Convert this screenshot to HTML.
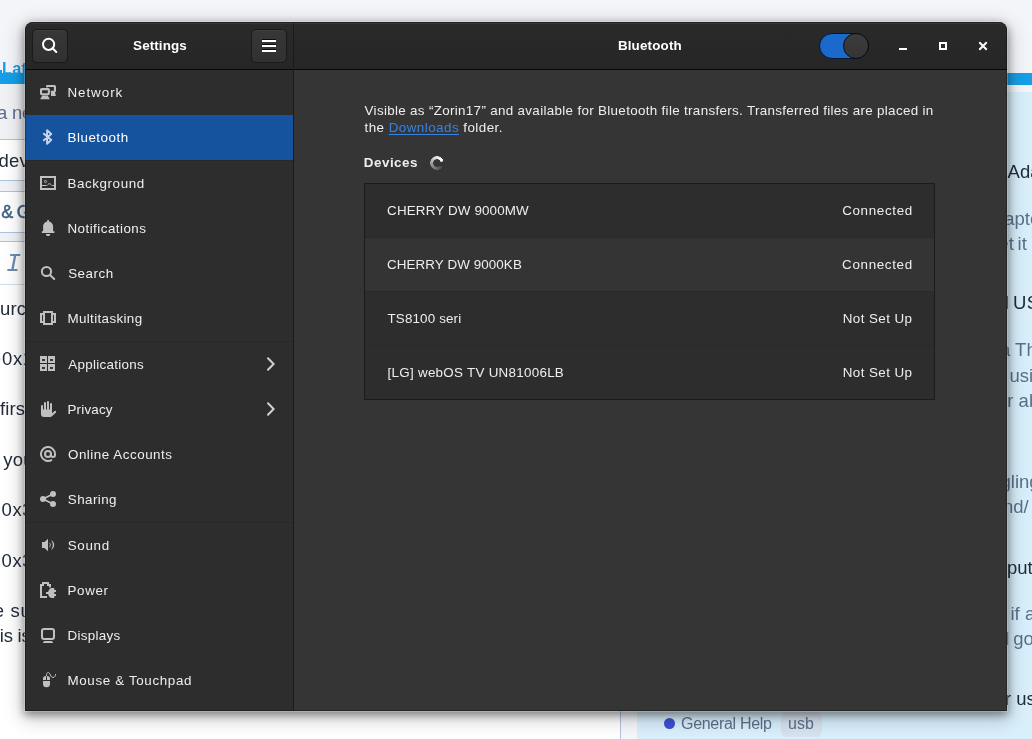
<!DOCTYPE html>
<html lang="en"><head><meta charset="utf-8"><title>Settings - Bluetooth</title>
<style>
html,body{margin:0;padding:0}
body{width:1032px;height:739px;overflow:hidden;position:relative;background:#fff;font-family:"Liberation Sans",sans-serif;}
.abs{position:absolute}
.t{position:absolute;white-space:pre;font-size:13.4px;line-height:20px;color:#eeeeec}
.bgt{position:absolute;white-space:pre;font-family:"Liberation Sans",sans-serif;font-size:18.5px;line-height:24px;color:#222c3a}
.gr{color:#5c6f8a}
#win{will-change:transform;position:absolute;left:25px;top:22px;width:982px;height:689px;border-radius:8px 8px 0 0;overflow:hidden;background:#353535}
#shadow{position:absolute;left:25px;top:22px;width:982px;height:689px;border-radius:8px 8px 0 0;box-shadow:0 0 0 1px rgba(255,255,255,.22),0 3px 9px 1px rgba(0,0,0,.38),0 5px 19px 3px rgba(0,0,0,.22)}
.hb{position:absolute;top:0;height:47px;background:linear-gradient(#2a2a2a,#262626);border-bottom:1px solid #080808}
.btn{position:absolute;top:7px;width:34px;height:32px;border:1px solid #1a1a1a;border-radius:5px;background:linear-gradient(#373737,#313131);box-shadow:inset 0 1px rgba(255,255,255,.03)}
.row{position:absolute;left:0;width:268px;height:45px}
.row svg{position:absolute;left:15px;top:14px}
.row .t{left:43px;top:12.500px}
.sep{position:absolute;left:0;width:268px;height:1px;background:#282828}
.lrow{position:absolute;left:1px;width:569px;height:53px;background:#2d2d2d}
.lrow .n{left:22px;top:16.500px}
.lrow .s{left:478px;top:16.500px}
</style></head><body>
<div id="bg" class="abs" style="left:0;top:0;width:1032px;height:739px;will-change:transform">
<div class="abs" style="left:0;top:0;width:1032px;height:92px;background:#f4f5f9"></div>
<div class="abs" style="left:0;top:84px;width:620px;height:56px;background:#f1f2f6"></div>
<div class="abs" style="left:0;top:140px;width:620px;height:599px;background:#fff"></div>
<div class="abs" style="left:0;top:73px;width:60px;height:11px;background:#169fe8"></div>
<div class="abs" style="left:0;top:70px;width:2px;height:3px;background:#169fe8"></div>
<div class="bgt" style="left:2px;top:56px;font-weight:bold;font-size:16.300px;letter-spacing:.3px;color:#169fe8">Latest</div>
<div class="abs" style="left:0;top:139px;width:60px;height:1px;background:#b0c2d9"></div>
<div class="abs" style="left:0;top:180px;width:60px;height:12px;background:#f0f2f7;border-top:1px solid #b0c2d9;border-bottom:1px solid #b0c2d9;box-sizing:border-box"></div>
<div class="abs" style="left:0;top:232px;width:60px;height:10px;background:#f0f2f7;border-top:1px solid #b0c2d9;border-bottom:1px solid #b0c2d9;box-sizing:border-box"></div>
<div class="abs" style="left:0;top:284px;width:60px;height:1px;background:#d5dde9"></div>
<div class="bgt gr" style="left:-3px;top:101px;letter-spacing:-.2px">a new topic</div>
<div class="bgt" style="left:-1.500px;top:149px;letter-spacing:.2px">device</div>
<div class="bgt" style="left:1.200px;top:199.500px;font-size:18px;letter-spacing:-.7px;color:#3f5f85;-webkit-text-stroke:.45px">&amp; General</div>
<div class="bgt" style="left:6px;top:250.500px;font-family:'Liberation Mono',monospace;font-style:italic;font-size:25px;line-height:28px;color:#6a8db5">I</div>
<div class="bgt" style="left:0px;top:297px;letter-spacing:.2px">urce</div>
<div class="bgt" style="left:-9.300px;top:347px;letter-spacing:.9px">e0x<span style="letter-spacing:0;margin-left:-.8px">1</span></div>
<div class="bgt" style="left:0px;top:397px;letter-spacing:.1px">first</div>
<div class="bgt" style="left:3.300px;top:448px;letter-spacing:.1px">you</div>
<div class="bgt" style="left:1.500px;top:498px;letter-spacing:.6px">0x3</div>
<div class="bgt" style="left:1.500px;top:549px;letter-spacing:.6px">0x3</div>
<div class="bgt" style="left:-6.300px;top:599px;letter-spacing:.7px">e sure</div>
<div class="bgt" style="left:-.3px;top:624px;word-spacing:-.7px">is is</div>
<div class="abs" style="left:960px;top:73px;width:72px;height:12px;background:#169fe8"></div>
<div class="abs" style="left:637px;top:92px;width:395px;height:647px;background:#d9effc"></div>
<div class="abs" style="left:620px;top:700px;width:1px;height:39px;background:#b0c2d9"></div>
<div class="abs" style="left:621px;top:700px;width:16px;height:39px;background:#f4f6fa"></div>
<div class="bgt" style="left:1001.4px;top:160px">-Adapter</div>
<div class="bgt gr" style="left:1004.200px;top:207px">apter</div>
<div class="bgt gr" style="left:998.500px;top:232px;word-spacing:-1.500px">et it</div>
<div class="bgt" style="left:1005px;top:291px;letter-spacing:.5px;word-spacing:-2.300px">l USB</div>
<div class="bgt gr" style="left:1000px;top:338px">a The</div>
<div class="bgt gr" style="left:1009.400px;top:364px">using</div>
<div class="bgt gr" style="left:1007.300px;top:389px">r about</div>
<div class="bgt gr" style="left:1000.500px;top:470px">gling</div>
<div class="bgt gr" style="left:1003px;top:495px">nd/</div>
<div class="bgt" style="left:1007px;top:556px">put</div>
<div class="bgt gr" style="left:1010.500px;top:602px">if a</div>
<div class="bgt gr" style="left:1005.200px;top:627px;word-spacing:-1.300px">l go</div>
<div class="bgt" style="left:1005px;top:687px">r us</div>
<div class="abs" style="left:664px;top:718px;width:11px;height:11px;border-radius:50%;background:#3c50d6"></div>
<div class="bgt gr" style="left:681px;top:712px;font-size:16px;letter-spacing:-.3px">General Help</div>
<div class="abs" style="left:781px;top:712px;width:40.500px;height:25px;border-radius:6px;background:#d7e2ef"></div>
<div class="bgt gr" style="left:788px;top:712px;font-size:16px">usb</div>
</div>
<div id="shadow"></div>
<div id="win">
<div class="hb" style="left:0;width:268px"></div><div class="hb" style="left:269px;width:713px"></div>
<div class="abs" style="left:268px;top:0;width:1px;height:689px;background:#1b1b1b"></div>
<div class="btn" style="left:7px"><svg class="abs" style="left:0;top:0" width="34" height="32" viewBox="0 0 34 32"><circle cx="15.600" cy="14.300" r="5.600" fill="none" stroke="#fff" stroke-width="2"/><path d="M19.800 18.500l3.500 3.500" stroke="#fff" stroke-width="2" stroke-linecap="round"/></svg></div>
<div class="btn" style="left:226px"><svg class="abs" style="left:0;top:0" width="34" height="32" viewBox="0 0 34 32"><path fill="#000" d="M10 9.200h14v1H10zM10 14.200h14v1H10zM10 19.200h14v1H10z"/><path fill="#fff" d="M10 10h14v2H10zM10 15h14v2H10zM10 20h14v2H10z"/></svg></div>
<div class="t" id="t_settings" style="left:108px;top:14px;font-weight:bold;color:#fff;-webkit-text-stroke:0;letter-spacing:0.111px;margin-left:0.11px;">Settings</div>
<div class="t" id="t_bt" style="left:593px;top:14px;font-weight:bold;color:#fff;-webkit-text-stroke:0;letter-spacing:0.168px;margin-left:-0.14px;">Bluetooth</div>
<div class="abs" style="left:794px;top:11px;width:48px;height:24px;border:1px solid #051634;border-radius:13px;background:#1b69cb"></div>
<div class="abs" style="left:818px;top:11px;width:24px;height:24px;border:1px solid #0b0b0b;border-radius:50%;background:linear-gradient(#3c3c3c,#353535)"></div>
<svg class="abs" style="left:870px;top:16px" width="100" height="16" viewBox="0 0 100 16"><path fill="#fff" d="M4 10h8v2H4z"/><path fill="none" stroke="#fff" stroke-width="2" d="M45 5h6v6h-6z"/><path fill="none" stroke="#fff" stroke-width="2" stroke-linecap="square" d="M85 5l6 6M91 5l-6 6"/></svg>
<div class="abs" id="side" style="left:0;top:48px;width:268px;height:641px;background:#2d2d2d">
<div class="row" style="top:0px;"><svg width="16" height="16" viewBox="0 0 16 16"><g transform="translate(0 .55)"><path fill="#c0c0c0" fill-rule="evenodd" d="M1.600 3.400h6.700A1.600 1.600 0 0 1 9.900 5v4a1.600 1.600 0 0 1-1.600 1.600H1.600A1.600 1.600 0 0 1 0 9V5a1.600 1.600 0 0 1 1.600-1.600zM2.100 5.600v3.200h5.700V5.600z"/><path fill="#c0c0c0" d="M2.300 11h5.400l2.100 3.600H.2z"/><path fill="#c0c0c0" d="M6.200.5h8.200A1.600 1.600 0 0 1 16 2.100v4.300a1.400 1.400 0 0 1-1 1.300l.9 3.700H11V7.700h-.3V6.100h3.200V2.500H7.800v.4H6.200z"/></g></svg><div class="t" id="s_network" style="letter-spacing:0.949px;margin-left:-0.57px;">Network</div></div>
<div class="row" style="top:45px;background:#15539e;"><svg width="16" height="16" viewBox="0 0 16 16"><path fill="none" stroke="#c8d6ea" stroke-width="1.9" stroke-linejoin="round" stroke-linecap="round" d="M3.9 4.7l7.3 6.3L7.100 14.800V1.200L11.200 5l-7.300 6.300"/></svg><div class="t" id="s_bluetooth" style="color:#fff;letter-spacing:0.535px;margin-left:-0.58px;">Bluetooth</div></div>
<div class="row" style="top:91px;"><svg width="16" height="16" viewBox="0 0 16 16"><rect x="1" y="2" width="14" height="12" fill="none" stroke="#c0c0c0" stroke-width="2"/><circle cx="5.5" cy="6.5" r="1.1" fill="none" stroke="#c0c0c0" stroke-width=".9"/><path fill="none" stroke="#c0c0c0" stroke-width="1" d="M2 10.5h4.5c1.200 0 1.500-1.800 2.900-1.800s1.700 1.800 2.900 1.800H14"/></svg><div class="t" id="s_background" style="letter-spacing:0.585px;margin-left:-0.58px;">Background</div></div>
<div class="row" style="top:136px;"><svg width="16" height="16" viewBox="0 0 16 16"><path fill="#c0c0c0" d="M3.100 11.300V6.500C3.100 3.800 5 2.100 7.200 1.600V.800a.9.900 0 0 1 1.800 0v.8c2.200.5 4.100 2.200 4.100 4.900v4.800h1.300v1.800H1.800v-1.800zM5.800 14h4.500a2.250 2.100 0 0 1-4.500 0z"/></svg><div class="t" id="s_notifications" style="letter-spacing:0.463px;margin-left:-0.57px;">Notifications</div></div>
<div class="row" style="top:181px;"><svg width="16" height="16" viewBox="0 0 16 16"><circle cx="6.500" cy="6.500" r="4.600" fill="none" stroke="#c0c0c0" stroke-width="2"/><path stroke="#c0c0c0" stroke-width="2" stroke-linecap="round" d="M10.200 10.200l4 3.800"/></svg><div class="t" id="s_search" style="letter-spacing:0.521px;margin-left:0.18px;">Search</div></div>
<div class="row" style="top:226px;"><svg width="16" height="16" viewBox="0 0 16 16"><rect x="4" y="2" width="8" height="12" fill="none" stroke="#c0c0c0" stroke-width="2"/><path fill="#c0c0c0" d="M0 3h3v2H2v6h1v2H0zM16 3h-3v2h1v6h-1v2h3z"/></svg><div class="t" id="s_multitasking" style="letter-spacing:0.362px;margin-left:-0.57px;">Multitasking</div></div>
<div class="row" style="top:272px;"><svg width="16" height="16" viewBox="0 0 16 16"><path fill="#c0c0c0" d="M0 0h7v7h-7z"/><path fill="#141414" d="M2 3.2v1.600h3v-1.600z"/><path fill="#c0c0c0" d="M0 8h7v7h-7z"/><path fill="#141414" d="M2 11.2v1.600h3v-1.600z"/><path fill="#c0c0c0" d="M8 0h7v7h-7z"/><path fill="#141414" d="M10 3.2v1.600h3v-1.600z"/><path fill="#c0c0c0" d="M8 8h7v7h-7z"/><path fill="#141414" d="M10 11.2v1.600h3v-1.600z"/></svg><div class="t" id="s_applications" style="letter-spacing:0.307px;margin-left:0.23px;">Applications</div></div>
<div class="row" style="top:317px;"><svg width="16" height="16" viewBox="0 0 16 16"><path fill="#c0c0c0" d="M1 5a1 1 0 0 1 2 0v3.600h1V2a1 1 0 0 1 2 0v6.600h1V1a1 1 0 0 1 2 0v7.600h1V3a1 1 0 0 1 2 0v9.300l2.600-2.300a1 1 0 0 1 1.400 1.400l-4.300 4.100c-.4.300-.8.500-1.300.500H4a3 3 0 0 1-3-3z"/></svg><div class="t" id="s_privacy" style="letter-spacing:0.200px;margin-left:-0.57px;">Privacy</div></div>
<div class="row" style="top:362px;"><svg width="16" height="16" viewBox="0 0 16 16"><path fill="none" stroke="#c0c0c0" stroke-width="2" stroke-linecap="round" d="M11.300 14.170A7 7 0 1 1 15 8v1a2 2 0 0 1-4 0V8"/><circle cx="8" cy="8" r="3" fill="none" stroke="#c0c0c0" stroke-width="2"/></svg><div class="t" id="s_online" style="letter-spacing:0.522px;margin-left:-0.07px;">Online Accounts</div></div>
<div class="row" style="top:407px;"><svg width="16" height="16" viewBox="0 0 16 16"><circle cx="3" cy="8" r="3" fill="#c0c0c0"/><circle cx="13" cy="3" r="3" fill="#c0c0c0"/><circle cx="13" cy="13" r="3" fill="#c0c0c0"/><path fill="none" stroke="#c0c0c0" stroke-width="1.700" d="M13 3L3 8l10 5"/></svg><div class="t" id="s_sharing" style="letter-spacing:0.438px;margin-left:-0.24px;">Sharing</div></div>
<div class="row" style="top:453px;"><svg width="16" height="16" viewBox="0 0 16 16"><path fill="#c0c0c0" d="M2 5h2.500L8 1.700v12.600L4.500 11H2zM9 5c2.400 1.500 2.400 4.500 0 6 1.200-2 1.200-4 0-6zM11 3c4.300 2.500 4.300 7.500 0 10 2.400-3 2.400-7 0-10z"/></svg><div class="t" id="s_sound" style="letter-spacing:0.667px;margin-left:-0.24px;">Sound</div></div>
<div class="row" style="top:498px;"><svg width="16" height="16" viewBox="0 0 16 16"><path fill="none" stroke="#c0c0c0" stroke-width="2" d="M7 15H1V3h2V1h5v2h2v2.500"/><path fill="#c0c0c0" d="M8 11c0-3 2-5 4-5h2.300v2H16v2h-1.700v2H16v2h-1.700v2H12c-2 0-4-2-4-5zM6 10h2.500v2H6z"/></svg><div class="t" id="s_power" style="letter-spacing:0.657px;margin-left:-0.57px;">Power</div></div>
<div class="row" style="top:543px;"><svg width="16" height="16" viewBox="0 0 16 16"><rect x="2" y="2" width="12" height="10" rx="2" fill="none" stroke="#c0c0c0" stroke-width="2"/><path fill="#c0c0c0" d="M3 16c0-1.400 1-2 2.500-2h5c1.500 0 2.500.6 2.500 2z"/></svg><div class="t" id="s_displays" style="letter-spacing:0.293px;margin-left:-0.57px;">Displays</div></div>
<div class="row" style="top:588px;"><svg width="16" height="16" viewBox="0 0 16 16"><path fill="#c0c0c0" d="M3 8V6.700A2.700 2.700 0 0 1 5.700 4H6v4zM7 4h.3A2.700 2.700 0 0 1 10 6.700V8H7zM3 9h7v2.800a3.500 3.500 0 0 1-7 0z"/><path fill="none" stroke="#c0c0c0" stroke-width="1" d="M6.500 4.200C6.300 1.500 7 .5 8.300.5c2.200 0 1.700 5 4.700 5 1.800 0 2.600-2 2.700-3.500"/></svg><div class="t" id="s_mouse" style="letter-spacing:0.644px;margin-left:-0.57px;">Mouse &amp; Touchpad</div></div>
<div class="sep" style="top:90px"></div>
<div class="sep" style="top:271px"></div>
<div class="sep" style="top:452px"></div>
<svg class="abs" style="left:237px;top:286px" width="16" height="16" viewBox="0 0 16 16"><path fill="none" stroke="#d0d0cf" stroke-width="2" stroke-linecap="round" stroke-linejoin="miter" d="M6 2.300L11.600 8 6 13.700"/></svg>
<svg class="abs" style="left:237px;top:331px" width="16" height="16" viewBox="0 0 16 16"><path fill="none" stroke="#d0d0cf" stroke-width="2" stroke-linecap="round" stroke-linejoin="miter" d="M6 2.300L11.600 8 6 13.700"/></svg>
</div>
<div class="abs" id="main" style="left:269px;top:48px;width:713px;height:641px;background:#353535">
<div class="t" id="m_l1" style="left:70px;top:31px;letter-spacing:0.324px;margin-left:0.58px;">Visible as “Zorin17” and available for Bluetooth file transfers. Transferred files are placed in</div>
<div class="t" id="m_l2" style="left:70px;top:48px;letter-spacing:0.458px;margin-left:0.50px;">the <span style="color:#3584e4;text-decoration:underline;text-underline-offset:2px">Downloads</span> folder.</div>
<div class="t" id="m_dev" style="left:70px;top:83px;font-weight:bold;letter-spacing:0.501px;margin-left:-0.19px;">Devices</div>
<div class="abs" style="left:135px;top:85px;width:16px;height:16px;border-radius:50%;background:conic-gradient(from 127deg,rgba(255,255,255,.10) 0deg,rgba(255,255,255,.45) 120deg,rgba(255,255,255,.85) 220deg,#fff 290deg,transparent 294deg);-webkit-mask:radial-gradient(circle,transparent 3.500px,#000 4.100px,#000 6.500px,transparent 7.100px);mask:radial-gradient(circle,transparent 3.500px,#000 4.100px,#000 6.500px,transparent 7.100px)"></div>
<div class="abs" style="left:146.24px;top:89.03px;width:2.800px;height:2.800px;border-radius:50%;background:#fff"></div>
<div class="abs" style="left:70px;top:113px;width:569px;height:215px;border:1px solid #1b1b1b;background:#2d2d2d">
<div class="lrow" style="left:0;top:0px;"><div class="t n" id="d_n0" style="letter-spacing:0.147px;margin-left:0.11px;">CHERRY DW 9000MW</div><div class="t s" id="d_s0" style="letter-spacing:0.670px;margin-left:-0.89px;">Connected</div></div>
<div class="abs" style="left:0;top:53px;width:569px;height:1px;background:#292929"></div>
<div class="lrow" style="left:0;top:54px;background:#343434;"><div class="t n" id="d_n1" style="letter-spacing:0.085px;margin-left:0.08px;">CHERRY DW 9000KB</div><div class="t s" id="d_s1" style="letter-spacing:0.663px;margin-left:-0.92px;">Connected</div></div>
<div class="abs" style="left:0;top:107px;width:569px;height:1px;background:#292929"></div>
<div class="lrow" style="left:0;top:108px;"><div class="t n" id="d_n2" style="letter-spacing:0.149px;margin-left:0.50px;">TS8100 seri</div><div class="t s" id="d_s2" style="letter-spacing:0.422px;margin-left:-0.27px;">Not Set Up</div></div>
<div class="abs" style="left:0;top:161px;width:569px;height:1px;background:#292929"></div>
<div class="lrow" style="left:0;top:162px;"><div class="t n" id="d_n3" style="letter-spacing:0.275px;margin-left:0.54px;">[LG] webOS TV UN81006LB</div><div class="t s" id="d_s3" style="letter-spacing:0.422px;margin-left:-0.27px;">Not Set Up</div></div>
</div>
</div>
<div class="abs" style="left:0;top:0;width:982px;height:689px;border-radius:8px 8px 0 0;box-shadow:inset 0 0 0 1px rgba(0,0,0,.30),inset 0 2px 0 0 rgba(255,255,255,.055);pointer-events:none"></div>
</div>
</body></html>
